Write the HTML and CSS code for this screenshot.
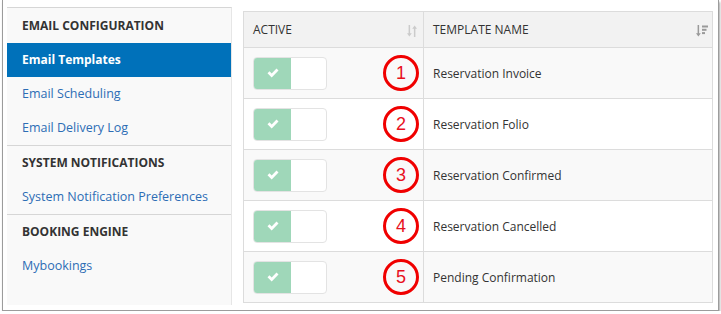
FILE: index.html
```html
<!DOCTYPE html>
<html lang="en">
<head>
    <meta charset="UTF-8">
    <meta name="viewport" content="width=device-width, initial-scale=1.0">
    <title>Email Templates</title>
    <link rel="stylesheet" href="styles.css">
</head>
<body>
    <div class="frame">

        <!-- Settings Sidebar -->
        <div class="sidebar">
            <div class="side-section">
                <div class="side-heading">EMAIL CONFIGURATION</div>
                <a class="side-link active" href="#">Email Templates</a>
                <a class="side-link" href="#">Email Scheduling</a>
                <a class="side-link" href="#">Email Delivery Log</a>
            </div>
            <div class="side-section">
                <div class="side-heading">SYSTEM NOTIFICATIONS</div>
                <a class="side-link" href="#">System Notification Preferences</a>
            </div>
            <div class="side-section">
                <div class="side-heading">BOOKING ENGINE</div>
                <a class="side-link" href="#">Mybookings</a>
            </div>
        </div>

        <!-- Templates Table -->
        <table class="templates">
            <thead>
                <tr>
                    <th class="col-active">
                        <div class="th-inner">
                            <span>ACTIVE</span>
                            <svg class="sort-icon faint" width="10" height="12" viewBox="0 0 10 12">
                                <path d="M1.6 0h1.5v8.2h1.7L2.35 11.6 0 8.2h1.6z"/>
                                <path d="M6.9 12h1.5V3.8h1.6L7.65 0.4 5.2 3.8h1.7z"/>
                            </svg>
                        </div>
                    </th>
                    <th>
                        <div class="th-inner">
                            <span>TEMPLATE NAME</span>
                            <svg class="sort-icon" width="12" height="12" viewBox="0 0 12 12">
                                <path d="M1.6 0h1.5v8.2h1.7L2.35 11.6 0 8.2h1.6z"/>
                                <rect x="6" y="0.5" width="6" height="2"/>
                                <rect x="6" y="3.8" width="4.5" height="2"/>
                                <rect x="6" y="7.1" width="3" height="2"/>
                            </svg>
                        </div>
                    </th>
                </tr>
            </thead>
            <tbody id="templateRows"></tbody>
        </table>
    </div>

    <script>
        // Build the template rows
        const templates = [
            "Reservation Invoice",
            "Reservation Folio",
            "Reservation Confirmed",
            "Reservation Cancelled",
            "Pending Confirmation"
        ];
        const rows = document.getElementById("templateRows");

        templates.forEach((name, i) => {
            const tr = document.createElement("tr");
            tr.innerHTML = `
                <td class="col-active">
                    <div class="cell-active">
                        <div class="toggle">
                            <span class="toggle-on">
                                <svg width="12" height="10" viewBox="0 0 12 10">
                                    <path d="M0.5 5.2l2-2 2.2 2.2L9.5 0.6l2 2-6.8 6.8z" fill="#fff"/>
                                </svg>
                            </span>
                            <span class="toggle-off"></span>
                        </div>
                        <span class="marker">${i + 1}</span>
                    </div>
                </td>
                <td class="name">${name}</td>`;
            rows.appendChild(tr);
        });
    </script>
</body>
</html>
```

FILE: styles.css
```css
/* General Styles */
body {
    margin: 0;
    background: #fff;
    font-family: "Open Sans", Arial, sans-serif;
    color: #333;
}

.frame {
    box-sizing: border-box;
    width: 717px;
    height: 311px;
    margin-left: 2px;
    padding: 7px 4px 0 4px;
    border: 1px solid #9c9c9c;
    border-top: none;
    box-shadow: 1px 2px 2px rgba(0, 0, 0, 0.35);
    display: flex;
    gap: 11px;
    align-items: flex-start;
}

/* Sidebar */
.sidebar {
    width: 225px;
    height: 298px;
    box-sizing: border-box;
    background: #f9f9f9;
    border-top: 1px solid #d6d6d6;
    border-right: 1px solid #e6e6e6;
}

.side-section + .side-section {
    border-top: 1px solid #d6d6d6;
}

.side-heading {
    height: 34px;
    line-height: 34px;
    padding-left: 15px;
    font-size: 12px;
    font-weight: bold;
    color: #333;
}

.side-section:first-child .side-heading {
    height: 35px;
    line-height: 35px;
}

.side-link {
    display: block;
    height: 34px;
    line-height: 34px;
    padding-left: 15px;
    font-size: 12.5px;
    color: #2d6db5;
    text-decoration: none;
}

.side-link.active {
    background: #0071ba;
    color: #fff;
    font-size: 12px;
    font-weight: bold;
}

/* Table */
.templates {
    margin-top: 4px;
    width: 470px;
    border-collapse: collapse;
    border: 1px solid #dcdcdc;
    font-size: 12px;
}

.templates th {
    height: 35px;
    padding: 0 4px 0 9px;
    background: #f2f2f2;
    border: 1px solid #dcdcdc;
    font-weight: normal;
    text-align: left;
    color: #333;
}

.th-inner {
    display: flex;
    justify-content: space-between;
    align-items: center;
}

.sort-icon {
    fill: #9a9a9a;
    margin-top: 2px;
}

.sort-icon.faint {
    fill: #cbcbcb;
    margin-right: 2px;
}

.col-active {
    width: 166px;
}

.templates td {
    height: 50px;
    padding: 0 4px 0 9px;
    border: 1px solid #dcdcdc;
}

.templates tbody tr:nth-child(odd) td {
    background: #f9f9f9;
}

.templates tbody tr:nth-child(even) td {
    background: #fff;
}

.cell-active {
    display: flex;
    align-items: center;
    justify-content: space-between;
}

.toggle {
    display: flex;
    width: 74px;
    height: 33px;
    box-sizing: border-box;
    border: 1px solid #e3e3e3;
    border-radius: 4px;
    overflow: hidden;
    background: #fff;
}

.toggle-on {
    width: 37px;
    background: #9fd7b9;
    display: flex;
    align-items: center;
    justify-content: center;
}

.toggle-off {
    flex: 1;
}

.marker {
    width: 36px;
    height: 36px;
    box-sizing: border-box;
    border: 3px solid #f00000;
    border-radius: 50%;
    display: flex;
    align-items: center;
    justify-content: center;
    font-family: "Liberation Sans", Arial, sans-serif;
    font-size: 18px;
    color: #e8101e;
}

.name {
    color: #333;
}
```
